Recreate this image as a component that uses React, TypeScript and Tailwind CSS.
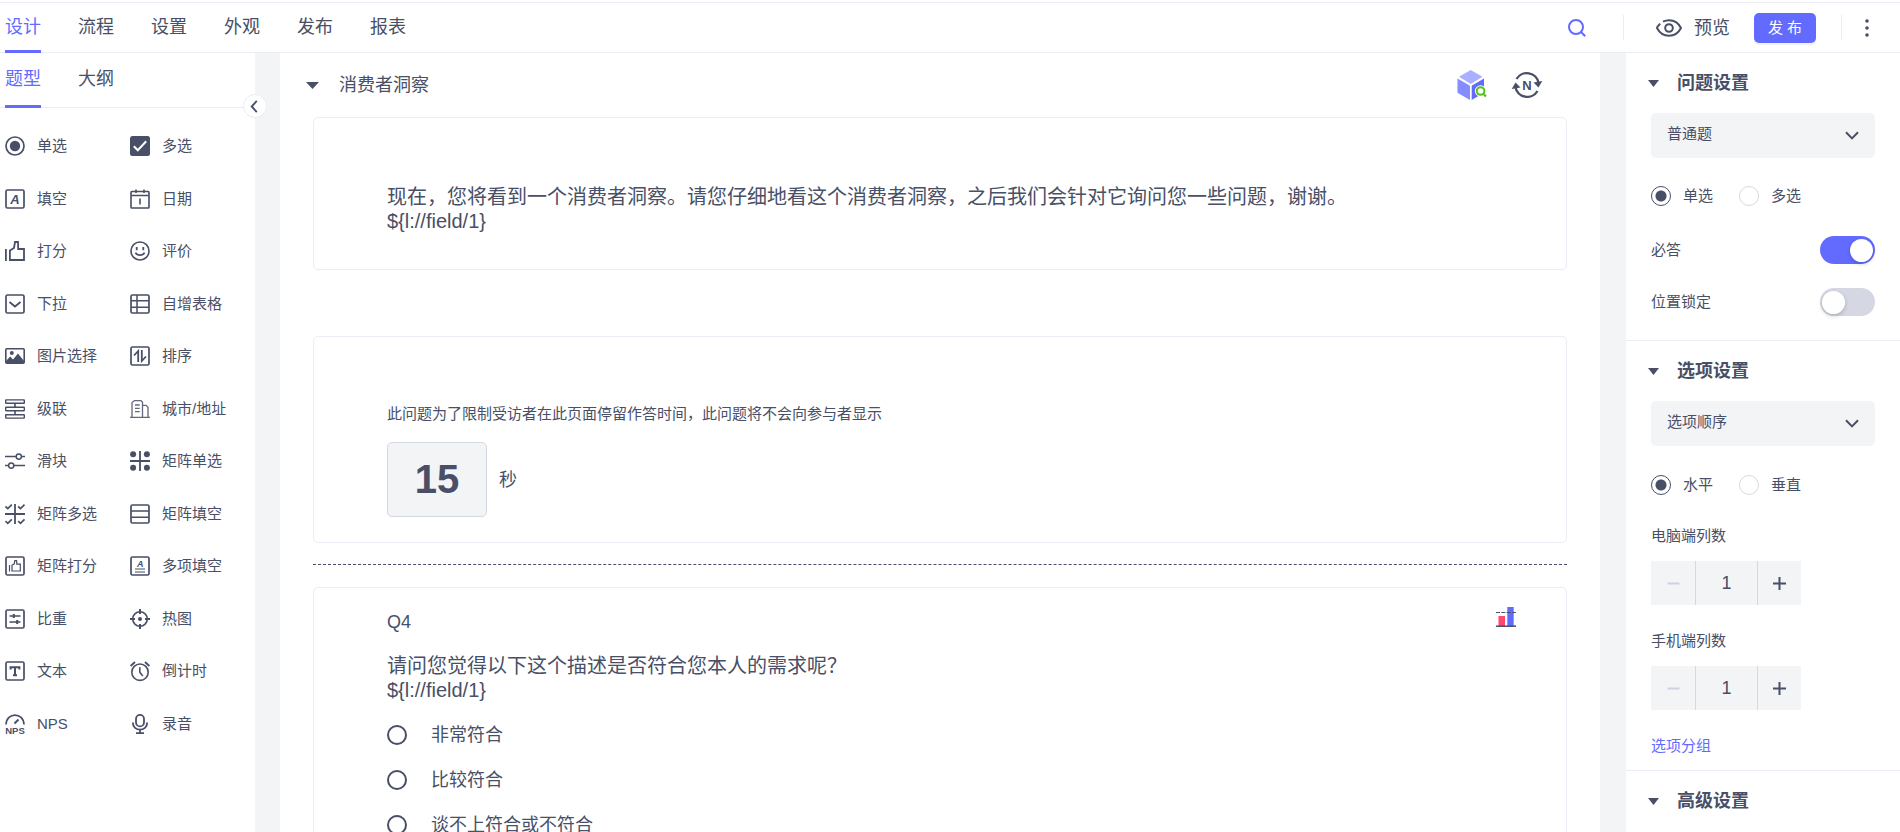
import React, { useState } from 'react';

interface QuestionType {
  label: string;
  icon: React.ReactNode;
}

const NAV_ITEMS = ['设计', '流程', '设置', '外观', '发布', '报表'];
const SIDE_TABS = ['题型', '大纲'];
const ANSWERS = ['非常符合', '比较符合', '谈不上符合或不符合', '比较不符合', '非常不符合'];

const Frame = () => <rect x="1" y="1" width="18" height="18" rx="1.5" strokeWidth="1.7" />;

const QUESTION_TYPES: QuestionType[] = [
  {
    label: '单选',
    icon: (
      <>
        <circle cx="10" cy="10" r="9" strokeWidth="1.7" />
        <circle cx="10" cy="10" r="5.2" fill="currentColor" stroke="none" />
      </>
    ),
  },
  {
    label: '多选',
    icon: (
      <>
        <rect width="20" height="20" rx="2.5" fill="currentColor" stroke="none" />
        <path d="M3.8 10.2 L7.8 14.2 L16.2 5.2" stroke="#fff" strokeWidth="2" />
      </>
    ),
  },
  {
    label: '填空',
    icon: (
      <>
        <Frame />
        <text x="10" y="14.8" textAnchor="middle" fill="currentColor" stroke="none" fontSize="13" fontWeight="bold" fontStyle="italic">A</text>
      </>
    ),
  },
  {
    label: '日期',
    icon: (
      <>
        <rect x="1" y="2.5" width="18" height="16.5" rx="0.8" />
        <path d="M1 6.5 H19 M6 0.5 V4 M14 0.5 V4" />
        <path d="M10 9.5 V15.5" />
      </>
    ),
  },
  {
    label: '打分',
    icon: (
      <>
        <path d="M0.9 8 V20" strokeWidth="1.8" />
        <path d="M4.9 19 V9.5 L9 7 L10 1 H13 L13.2 8 H19 V19 Z" strokeWidth="1.8" />
      </>
    ),
  },
  {
    label: '评价',
    icon: (
      <>
        <circle cx="10" cy="10" r="9" />
        <path d="M6.7 6 V9.2 M13.3 6 V9.2" strokeWidth="1.8" />
        <path d="M5.5 11.6 C6.8 15 13.2 15 14.5 11.6" />
      </>
    ),
  },
  {
    label: '下拉',
    icon: (
      <>
        <Frame />
        <path d="M4.5 8 L10 12.5 L15.5 8" strokeWidth="1.8" />
      </>
    ),
  },
  {
    label: '自增表格',
    icon: (
      <>
        <Frame />
        <path d="M7 1 V19 M1 6.8 H19 M1 13.2 H19" strokeWidth="1.5" />
      </>
    ),
  },
  {
    label: '图片选择',
    icon: (
      <>
        <rect x="0.8" y="2.8" width="18.4" height="14.4" rx="1" />
        <path d="M1 17 V15 L5.2 10.5 L8 13.5 L13 7.5 L19 15 V17 Z" fill="currentColor" stroke="none" />
        <circle cx="6.8" cy="7" r="2" fill="currentColor" stroke="none" />
      </>
    ),
  },
  {
    label: '排序',
    icon: (
      <>
        <Frame />
        <path d="M8.2 16 V5 L4 9.5 M11.8 4 V15 L16 10.5" strokeWidth="1.8" />
      </>
    ),
  },
  {
    label: '级联',
    icon: (
      <>
        <rect x="0.7" y="0.9" width="18.6" height="3.4" rx="0.4" strokeWidth="1.4" />
        <rect x="0.7" y="8.3" width="18.6" height="3.4" rx="0.4" strokeWidth="1.4" />
        <rect x="0.7" y="15.7" width="18.6" height="3.4" rx="0.4" strokeWidth="1.4" />
        <path d="M10 4.3 V8.3 M10 11.7 V15.7" />
      </>
    ),
  },
  {
    label: '城市/地址',
    icon: (
      <g strokeWidth="1.3" opacity="0.85">
        <path d="M0 18.3 H20 M2 18.3 V3.5 L4.5 1.6 H11 L12.5 3.2 V18.3 M12.5 6.3 H16 L18 8.3 V18.3" />
        <path d="M5 6 H9.7 M5 9.3 H9.7 M5 12.6 H9.7" />
      </g>
    ),
  },
  {
    label: '滑块',
    icon: (
      <g strokeWidth="1.5">
        <path d="M0 5.6 H11.2 M16.4 5.6 H20 M0 14.6 H3.6 M8.8 14.6 H20" />
        <circle cx="13.8" cy="5.6" r="2.6" />
        <circle cx="6.2" cy="14.6" r="2.6" />
      </g>
    ),
  },
  {
    label: '矩阵单选',
    icon: (
      <>
        <path d="M10 0 V20 M0 10 H20" strokeWidth="1.8" />
        <g fill="currentColor" stroke="none">
          <circle cx="3.1" cy="3.3" r="3" />
          <circle cx="16.9" cy="3.3" r="3" />
          <circle cx="3.1" cy="16.7" r="3" />
          <circle cx="16.9" cy="16.7" r="3" />
        </g>
      </>
    ),
  },
  {
    label: '矩阵多选',
    icon: (
      <>
        <path d="M10 0 V20 M0 10 H20" strokeWidth="1.8" />
        <path d="M0.5 2.5 L2.8 4.6 L6.8 0.7 M13.2 2.5 L15.5 4.6 L19.5 0.7 M0.5 17.2 L2.8 19.3 L6.8 15.4 M13.2 17.2 L15.5 19.3 L19.5 15.4" strokeWidth="1.7" />
      </>
    ),
  },
  {
    label: '矩阵填空',
    icon: (
      <>
        <Frame />
        <path d="M1 7 H19 M1 13.3 H19" strokeWidth="1.5" />
      </>
    ),
  },
  {
    label: '矩阵打分',
    icon: (
      <>
        <Frame />
        <path d="M4.5 9 V15.5" strokeWidth="1.2" />
        <path d="M7 15 V9.3 L9.3 7.8 L9.8 4.6 H11.6 L11.8 8.2 H15.3 V15 Z" strokeWidth="1.2" />
      </>
    ),
  },
  {
    label: '多项填空',
    icon: (
      <>
        <Frame />
        <text x="10.3" y="10.8" textAnchor="middle" fill="currentColor" stroke="none" fontSize="9" fontWeight="bold" fontStyle="italic">A</text>
        <path d="M5 13 H15 M5 16 H15" strokeWidth="1.2" />
      </>
    ),
  },
  {
    label: '比重',
    icon: (
      <>
        <Frame />
        <path d="M4.5 7 H15.5 M4.5 13 H15.5" strokeWidth="1.5" />
        <path d="M8.8 5 V9 M12.2 11 V15" strokeWidth="2" />
      </>
    ),
  },
  {
    label: '热图',
    icon: (
      <>
        <circle cx="10" cy="10" r="7.3" />
        <path d="M10 0 V5 M10 15 V20 M0 10 H5 M15 10 H20" strokeWidth="2" />
        <circle cx="10" cy="10" r="2" fill="currentColor" stroke="none" />
      </>
    ),
  },
  {
    label: '文本',
    icon: (
      <>
        <Frame />
        <path d="M5.6 8.6 V6.3 H14.4 V8.6 M10 6 V14.6 M8 14.3 H12" strokeWidth="2" />
      </>
    ),
  },
  {
    label: '倒计时',
    icon: (
      <>
        <circle cx="10" cy="11.2" r="8.2" />
        <path d="M0.6 5 L5 1 M19.4 5 L15 1" strokeWidth="1.8" />
        <path d="M9.8 6.3 V11.3 L12.8 15" />
      </>
    ),
  },
  {
    label: 'NPS',
    icon: (
      <>
        <path d="M1 10.5 C1.6 -2 18.4 -2 19 10.5" strokeWidth="1.7" />
        <path d="M9.5 9.5 L13.5 5.5" strokeWidth="2" />
        <text x="10" y="19.8" textAnchor="middle" fill="currentColor" stroke="none" fontSize="9.5" fontWeight="bold">NPS</text>
      </>
    ),
  },
  {
    label: '录音',
    icon: (
      <>
        <rect x="6" y="0.9" width="8" height="11.5" rx="4" strokeWidth="1.8" />
        <path d="M2.8 8.5 C2.8 18 17.2 18 17.2 8.5 M10 15.5 V19 M6 19.2 H14" strokeWidth="1.8" />
      </>
    ),
  },
];

const Triangle = ({ className = '' }: { className?: string }) => (
  <svg viewBox="0 0 12 7" className={`h-[7px] shrink-0 ${className}`} preserveAspectRatio="none" aria-hidden="true">
    <path d="M0 0 H12 L6 7 Z" fill="currentColor" />
  </svg>
);

const CubeIcon = () => (
  <svg viewBox="0 0 30 30" className="h-[30px] w-[30px]" aria-hidden="true">
    <path d="M13.7 0 L25.5 6.8 L13.7 14 L2 6.8 Z" fill="#a9b0ff" />
    <path d="M0.5 8.5 L13 15.7 V30 L0.5 22.8 Z" fill="#848cff" />
    <path d="M27 8.5 L14.7 15.7 V30 L27 22.8 Z" fill="#636bff" />
    <circle cx="23.6" cy="21" r="5.8" fill="#fff" />
    <circle cx="23.6" cy="21" r="3.8" fill="none" stroke="#52c41a" strokeWidth="2" />
    <path d="M26 23.5 L29 26.6" stroke="#52c41a" strokeWidth="2.2" />
  </svg>
);

const LoopIcon = () => (
  <svg viewBox="0 0 32 30" className="h-[30px] w-8" aria-hidden="true">
    <g fill="none" stroke="currentColor" strokeWidth="2.4">
      <path d="M5.5 9 A12 12 0 0 1 27.6 13" />
      <path d="M4.4 17 A12 12 0 0 0 26.5 21" />
    </g>
    <path d="M31.3 11 L27.5 17.5 L22.5 12.5 Z" fill="currentColor" />
    <path d="M0.7 19 L4.5 12.5 L9.5 17.5 Z" fill="currentColor" />
    <text x="16" y="19.6" textAnchor="middle" fontFamily="Liberation Sans Narrow, Liberation Sans" fontSize="13" fontWeight="bold" fill="currentColor">N</text>
  </svg>
);

const QuotaIcon = () => (
  <svg viewBox="0 0 20 20" className="h-5 w-5" aria-hidden="true">
    <rect x="2.5" y="9" width="6.5" height="10.5" fill="#ff4770" />
    <rect x="11.3" y="0" width="6.4" height="19.5" fill="#636bff" />
    <path d="M0 5.5 H20" stroke="#484f66" strokeWidth="1.2" strokeDasharray="4 1.3" />
    <path d="M0 19.2 H20" stroke="#484f66" strokeWidth="1.5" />
  </svg>
);

const SelectBox = ({ label, value }: { label: string; value: string }) => (
  <div className="relative">
    <select aria-label={label} className="h-[45px] w-full appearance-none rounded-[5px] bg-[#f3f4f6] px-4 pb-[3px] text-[15px]">
      <option>{value}</option>
    </select>
    <svg viewBox="0 0 14 9" className="pointer-events-none absolute top-[18px] right-4 h-[9px] w-[14px]" fill="none" stroke="currentColor" strokeWidth="2" aria-hidden="true">
      <path d="M1 1.2 L7 7.4 L13 1.2" />
    </svg>
  </div>
);

const RadioPair = ({ name, options }: { name: string; options: string[] }) => (
  <div className="flex gap-[26px]">
    {options.map((option, i) => (
      <label key={option} className="flex items-center gap-3 text-[15px] leading-5">
        <input
          type="radio"
          name={name}
          defaultChecked={i === 0}
          className="h-5 w-5 appearance-none rounded-full border border-[#d9d9d9] bg-white checked:border-[#484f66] checked:bg-[radial-gradient(circle,#484f66_5px,#fff_6px)]"
        />
        {option}
      </label>
    ))}
  </div>
);

const Toggle = ({ label, on = false }: { label: string; on?: boolean }) => (
  <label className="flex h-7 items-center justify-between text-[15px] leading-5">
    {label}
    <input
      type="checkbox"
      role="switch"
      defaultChecked={on}
      className="flex h-7 w-[55px] appearance-none items-center rounded-full bg-[#d5d7e3] px-[2px] before:h-[23px] before:w-[23px] before:rounded-full before:bg-white before:shadow-[0_2px_4px_rgba(0,35,11,0.2)] checked:justify-end checked:bg-[#636bff]"
    />
  </label>
);

const Stepper = ({ label }: { label: string }) => {
  const [count, setCount] = useState(1);
  return (
    <div>
      <div className="text-[15px] leading-5">{label}</div>
      <div className="mt-[15px] flex h-11 w-[150px] bg-[#f3f4f6]">
        <button aria-label="减少" disabled={count <= 1} onClick={() => setCount(count - 1)} className="flex w-11 items-center justify-center disabled:text-[#cfd1de]">
          <svg viewBox="0 0 13 13" className="h-[13px] w-[13px]" stroke="currentColor" strokeWidth="2" aria-hidden="true">
            <path d="M0.5 6.5 H12.5" />
          </svg>
        </button>
        <input
          aria-label={label}
          value={count}
          onChange={(e) => setCount(Number(e.target.value) || 1)}
          className="w-[63px] border-x border-[#d5d7e3] bg-transparent text-center text-lg"
        />
        <button aria-label="增加" onClick={() => setCount(count + 1)} className="flex flex-1 items-center justify-center">
          <svg viewBox="0 0 13 13" className="h-[13px] w-[13px]" stroke="currentColor" strokeWidth="2" aria-hidden="true">
            <path d="M0 6.5 H13 M6.5 0 V13" />
          </svg>
        </button>
      </div>
    </div>
  );
};

const SectionTitle = ({ children }: { children: React.ReactNode }) => (
  <h2 className="flex items-center gap-[18px] pl-[22px] text-lg leading-6 font-bold">
    <Triangle className="w-[11px]" />
    {children}
  </h2>
);

const Header = () => (
  <header className="flex h-[51px] shrink-0 items-stretch justify-between border-y border-[#ebecf5] bg-white pl-[5px]">
    <nav className="flex gap-[37px]">
      {NAV_ITEMS.map((item, i) => (
        <a
          key={item}
          href="#"
          className={`-mb-px flex items-center border-b-[3px] text-lg leading-6 ${i === 0 ? 'border-[#636bff] text-[#636bff]' : 'border-transparent'}`}
        >
          {item}
        </a>
      ))}
    </nav>
    <div className="flex items-center">
      <button aria-label="搜索" className="mr-[37px] text-[#636bff]">
        <svg viewBox="0 0 18 18" className="h-[18px] w-[18px]" fill="none" stroke="currentColor" strokeWidth="2" aria-hidden="true">
          <circle cx="8" cy="8" r="7" />
          <path d="M12.8 12.8 L17.2 17.2" />
        </svg>
      </button>
      <span className="h-[25px] w-px bg-[#ebecf5]" />
      <button className="ml-8 flex items-center gap-3 text-lg leading-6">
        <svg viewBox="0 0 26 18" className="h-[18px] w-[26px]" fill="none" stroke="currentColor" strokeWidth="2" aria-hidden="true">
          <path d="M4.2 4.8 C1.2 7.6 1 9 1 9 C3.5 13.8 8 16.8 13 16.8 S22.5 13.8 25 9 C22.5 4 18 1.2 13 1.2 C10.3 1.2 8.8 1.8 7 2.7" />
          <circle cx="13" cy="9" r="3.8" />
        </svg>
        预览
      </button>
      <button className="ml-6 h-[30px] w-[62px] rounded-[5px] bg-[#636bff] text-[15px] leading-5 text-white shadow-[0_2px_0_rgba(0,0,0,0.05)]">发 布</button>
      <span className="ml-[25px] h-[25px] w-px bg-[#ebecf5]" />
      <button aria-label="更多" className="mr-[31px] ml-[23px]">
        <svg viewBox="0 0 4 18" className="h-[18px] w-1" fill="currentColor" aria-hidden="true">
          <circle cx="2" cy="2" r="1.8" />
          <circle cx="2" cy="9" r="1.8" />
          <circle cx="2" cy="16" r="1.8" />
        </svg>
      </button>
    </div>
  </header>
);

const Sidebar = () => (
  <aside className="relative w-[255px] shrink-0 bg-white">
    <div className="flex h-[55px] gap-[37px] border-b border-[#ebecf5] pl-[5px]">
      {SIDE_TABS.map((tab, i) => (
        <button
          key={tab}
          className={`-mb-px flex items-center border-b-[3px] text-lg leading-6 ${i === 0 ? 'border-[#636bff] text-[#636bff]' : 'border-transparent'}`}
        >
          {tab}
        </button>
      ))}
    </div>
    <button aria-label="收起" className="absolute top-[41px] -right-3 z-10 flex h-6 w-6 items-center justify-center rounded-full border border-[#ebecf5] bg-white">
      <svg viewBox="0 0 8 14" className="mr-[3px] h-[13px] w-2" fill="none" stroke="currentColor" strokeWidth="2" aria-hidden="true">
        <path d="M7 1 L1.5 7 L7 13" />
      </svg>
    </button>
    <div className="mt-3 grid h-[630px] grid-cols-[125px_1fr] grid-rows-12 pl-[5px]">
      {QUESTION_TYPES.map((type) => (
        <button key={type.label} className="flex items-center gap-3 text-left text-[15px] leading-5">
          <svg viewBox="0 0 20 20" className="h-5 w-5 shrink-0 overflow-visible" fill="none" stroke="currentColor" strokeWidth="1.6" aria-hidden="true">
            {type.icon}
          </svg>
          {type.label}
        </button>
      ))}
    </div>
  </aside>
);

const Canvas = () => (
  <main className="mr-[26px] ml-[25px] min-w-0 flex-1 overflow-y-auto bg-white px-[33px] [scrollbar-width:none]">
    <div className="flex h-16 items-center justify-between">
      <h1 className="-ml-[7px] flex items-center gap-5 text-lg leading-6">
        <Triangle className="w-[13px]" />
        消费者洞察
      </h1>
      <div className="mr-6 flex items-center gap-6">
        <button aria-label="素材库"><CubeIcon /></button>
        <button aria-label="循环"><LoopIcon /></button>
      </div>
    </div>

    <section className="rounded-[5px] border border-[#ebecf5] px-[73px] pt-[67px] pb-9 text-xl leading-6">
      <p>现在，您将看到一个消费者洞察。请您仔细地看这个消费者洞察，之后我们会针对它询问您一些问题，谢谢。</p>
      <p>{'${l://field/1}'}</p>
    </section>

    <section className="mt-[66px] rounded-[5px] border border-[#ebecf5] px-[73px] pt-[67px] pb-[25px]">
      <p className="text-[15px] leading-5">此问题为了限制受访者在此页面停留作答时间，此问题将不会向参与者显示</p>
      <label className="mt-[18px] flex items-center gap-3 text-lg leading-6">
        <input defaultValue="15" className="h-[75px] w-[100px] rounded-[5px] border border-[#d5d7e3] bg-[#f3f4f6] text-center text-[40px] font-bold" />
        秒
      </label>
    </section>

    <hr className="mt-[21px] border-t border-dashed border-[#484f66]" />

    <section className="mt-[22px] rounded-[5px] border border-[#ebecf5] px-[73px] pt-[19px] pb-9">
      <div className="flex items-start justify-between">
        <span className="pt-[3px] text-lg leading-6">Q4</span>
        <button aria-label="配额" className="-mr-[23px]"><QuotaIcon /></button>
      </div>
      <div className="mt-5 text-xl leading-6">
        <p>请问您觉得以下这个描述是否符合您本人的需求呢？</p>
        <p>{'${l://field/1}'}</p>
      </div>
      <div className="mt-[10px]">
        {ANSWERS.map((answer) => (
          <label key={answer} className="flex h-[45px] items-center gap-6 text-lg leading-6">
            <input type="radio" name="q4" className="h-5 w-5 appearance-none rounded-full border-2 border-[#484f66] checked:bg-[#484f66]" />
            {answer}
          </label>
        ))}
      </div>
    </section>
  </main>
);

const SettingsPanel = () => (
  <aside className="w-[274px] shrink-0 overflow-y-auto bg-white pt-[18px] [scrollbar-width:none]">
    <SectionTitle>问题设置</SectionTitle>
    <div className="mt-[18px] px-[25px]">
      <SelectBox label="题目类型" value="普通题" />
      <div className="mt-7"><RadioPair name="choice" options={['单选', '多选']} /></div>
      <div className="mt-[30px] flex flex-col gap-6">
        <Toggle label="必答" on />
        <Toggle label="位置锁定" />
      </div>
    </div>

    <hr className="mt-6 mb-[18px] border-[#ebecf5]" />
    <SectionTitle>选项设置</SectionTitle>
    <div className="mt-[18px] px-[25px]">
      <SelectBox label="选项顺序" value="选项顺序" />
      <div className="mt-[29px]"><RadioPair name="direction" options={['水平', '垂直']} /></div>
      <div className="mt-[31px] flex flex-col gap-[26px]">
        <Stepper label="电脑端列数" />
        <Stepper label="手机端列数" />
      </div>
      <a href="#" className="mt-[26px] block text-[15px] leading-5 text-[#636bff]">选项分组</a>
    </div>

    <hr className="mt-[14px] mb-[18px] border-[#ebecf5]" />
    <SectionTitle>高级设置</SectionTitle>
  </aside>
);

const App: React.FC = () => (
  <div className="flex h-screen flex-col overflow-hidden bg-white pt-[2px] font-['Liberation_Sans','Noto_Sans_CJK_SC',sans-serif] text-[#484f66]">
    <Header />
    <div className="flex min-h-0 flex-1 bg-[#f3f4f6]">
      <Sidebar />
      <Canvas />
      <SettingsPanel />
    </div>
  </div>
);

export default App;
